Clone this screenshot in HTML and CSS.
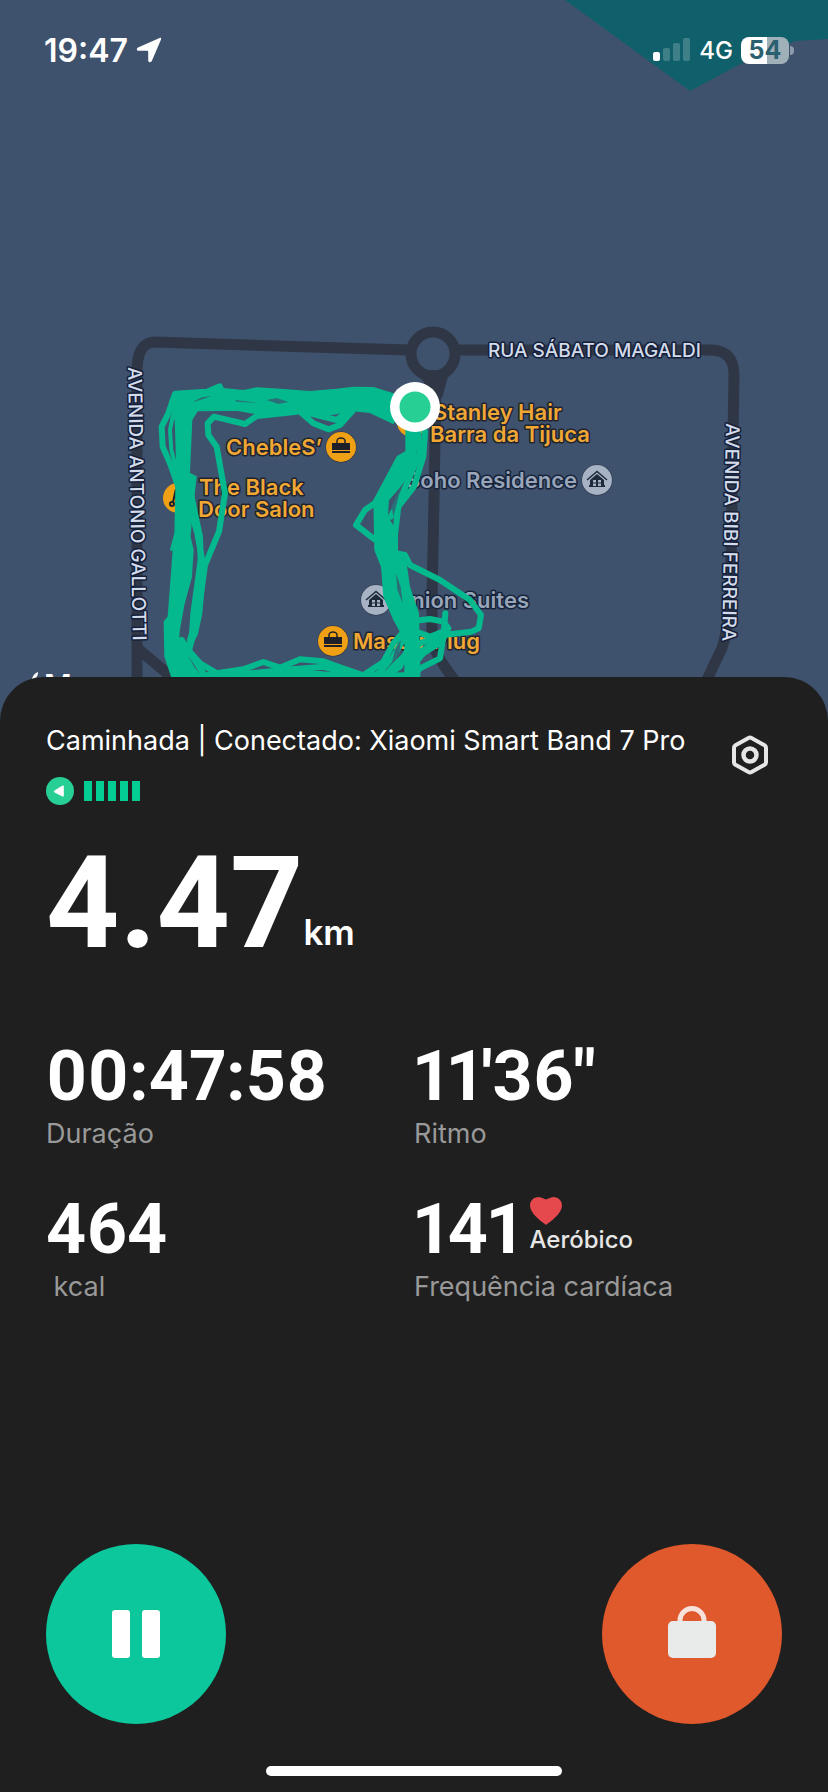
FILE: index.html
```html
<!DOCTYPE html>
<html lang="pt-BR">
<head>
	<meta charset="utf-8">
	<meta name="viewport" content="width=device-width, initial-scale=1">
	<title>Caminhada</title>
	<link rel="stylesheet" href="styles.css">
</head>
<body>

	<div class="screen">

		<header class="statusbar">
			<span class="clock">19:47
				<svg width="26" height="26" viewBox="0 0 26 26"><path d="M23.600 1C24.800.5 25.500 1.300 25 2.400L15.800 24C15 25.800 12.200 25.400 12.200 23.400V14.600Q12.200 13.800 11.400 13.800H2.600C.6 13.800.2 11.200 2 10.400z" fill="#fff"/></svg>
			</span>
			<span class="network">
				<svg width="38" height="24" viewBox="0 0 38 24" fill="#fff">
					<rect x="0" y="14" width="7" height="9" rx="2"/>
					<g opacity=".2">
						<rect x="10" y="10" width="7" height="13" rx="2"/>
						<rect x="20" y="5" width="7" height="18" rx="2"/>
						<rect x="30" y="0" width="7" height="23" rx="2"/>
					</g>
				</svg>
				<span class="carrier">4G</span>
				<span class="battery">54</span>
			</span>
		</header>

		<!-- Map -->
		<svg class="map" viewBox="0 0 828 720" role="img" aria-label="Mapa do percurso">
			<defs>
				<g id="bag">
					<circle r="15.500" fill="#2c3545"/>
					<circle r="15" fill="#efa014"/>
					<path d="M-4-4v-2a4 3 0 0 1 8 0v2" fill="none" stroke="#1d2029" stroke-width="1.500"/>
					<path d="M-9-4H9V3H-9zM-9 4H9V6H-9z" fill="#1d2029"/>
				</g>
				<g id="house">
					<circle r="15.500" fill="#2c3545"/>
					<circle r="15" fill="#a7b3c5"/>
					<path d="M-10 0L0-8.500 10 0" fill="none" stroke="#1f2a3a" stroke-width="1.500"/>
					<path d="M-7 0L0-6 7 0V5H8V7H-8V5H-7z" fill="#1f2a3a"/>
					<path d="M-4 0h3v2.500h-3zM1 0h3v2.500H1zM-4 3.500h3V6h-3zM1 3.500h3V6H1z" fill="#a7b3c5"/>
				</g>
			</defs>

			<rect width="828" height="720" fill="#3f526d"/>
			<path d="M565 0L690 91 748 60 795 41 828 39V0z" fill="#0f606a"/>

			<g class="roads">
				<path d="M137 720V375Q136 342 155 342L408 350"/>
				<path d="M458 350H712Q734 351 734 375L731 560Q730 625 722 648L702 690"/>
				<path d="M436 372L434 500 432 600V640Q434 655 462 690"/>
				<path d="M137 648L180 684"/>
				<circle cx="433" cy="354" r="22"/>
				<path d="M418 370H450L442 398H431z" fill="#2f3746" stroke="none"/>
			</g>

			<g class="street">
				<text x="488" y="357">RUA SÁBATO MAGALDI</text>
				<text transform="translate(128 367) rotate(89)">AVENIDA ANTONIO GALLOTTI</text>
				<text transform="translate(726 423) rotate(91)">AVENIDA BIBI FERREIRA</text>
			</g>

			<use href="#bag" x="341" y="447"/>
			<use href="#bag" x="333" y="641"/>
			<use href="#house" x="597" y="480"/>
			<use href="#house" x="376" y="600"/>
			<circle cx="412" cy="422" r="15" fill="#efa014"/>
			<circle cx="178" cy="498" r="15" fill="#efa014"/>
			<g fill="none" stroke="#1d2029" stroke-width="2">
				<circle cx="172" cy="504" r="2"/>
				<circle cx="179" cy="505" r="2"/>
				<path d="M176 489L173 502M176 489V503"/>
			</g>

			<g class="place">
				<text x="226" y="455">ChebleS’</text>
				<text><tspan x="199" y="495">The Black</tspan> <tspan x="198" y="517">Door Salon</tspan></text>
				<text><tspan x="433" y="420">Stanley Hair</tspan> <tspan x="430" y="442">Barra da Tijuca</tspan></text>
				<text x="353" y="649">Master Plug</text>
			</g>
			<g class="place hotel">
				<text x="406" y="488">Soho Residence</text>
				<text x="395" y="608">Union Suites</text>
			</g>

			<g class="route" transform="translate(110 320) scale(.33333)">
				<path class="fill" d="M195 214L290 208 320 195 333 192 340 206 400 212 440 204 510 208 600 215 680 208 730 202 790 203 850 222V310L780 277 730 272 650 286 560 276 480 288 380 270 262 272 245 300 238 460 258 470 248 560 235 700 228 820 205 900 207 960 250 1040 300 1100H195L165 1010 163 905 175 890 190 690 182 690 185 678 195 640 200 420 196 300 180 262 180 242z"/>
				<path d="M195 222L175 280 155 320 158 380 180 430 205 500"/>
				<path d="M205 240L188 290 180 330 184 390 200 450" stroke-width="12"/>
				<path d="M235 480L255 580 270 650 272 720 250 880 245 960 235 1000"/>
				<path d="M240 560L262 640 280 740 268 880 255 940 230 990"/>
				<path d="M225 620L242 690 237 770 215 850 195 960"/>
				<path d="M560 275L470 285 440 288 405 312 312 290 293 310 295 345 320 380 345 520 327 635 285 735 265 880 240 960"/>
				<path d="M235 990L270 1030 330 1065M215 960L280 1060"/>
				<path d="M570 275L610 310 655 328 690 315 730 270M600 280L680 300 720 270"/>
				<path d="M220 1080L330 1058 400 1048 460 1026 510 1043 570 1018 640 1024 690 1042 760 1066 820 1026 850 970 890 925"/>
				<path d="M300 1070L400 1062 520 1050 640 1040 740 1070 830 1060 890 1000"/>
				<path d="M250 1088L450 1072 580 1062 700 1072 900 1070" stroke-width="26"/>
				<path d="M835 285L860 300 905 330"/>

				<path class="fill" d="M888 330L925 330 912 440 870 500 835 540 832 590 862 640 862 690 888 730 898 800 925 880 930 1090H885V960L850 895 822 830 815 740 795 690 792 540 830 470 862 410 888 395z"/>
				<path d="M945 335L940 410 912 500 865 560 855 645"/>
				<path d="M925 335L928 400 895 480 870 540 842 590"/>
				<path d="M830 520L805 542 765 570 738 615 790 655 830 680"/>
				<path d="M860 700L885 705 900 735 990 780 1080 840 1113 885 1106 925 1085 935 1000 945 930 970 890 1010"/>
				<path d="M915 902L960 897 1000 905 1015 925 995 965 940 1000 890 1060"/>
				<path d="M1006 880L1000 950 990 1015 930 1045 900 1080"/>
				<path d="M905 930L960 950 1010 930M925 1000L985 960"/>
				<path d="M890 940L850 1010 800 1065M905 960L870 1040 820 1075"/>
				<g class="gaps">
					<path d="M470 240L500 234 535 246 505 252z"/>
					<path d="M248 246L275 232 305 228 270 240z"/>
					<path d="M845 560L872 500 862 545 850 590z"/>
					<path d="M375 240L440 248 380 245z"/>
					<path d="M858 760L872 800 878 850 862 810z"/>
					<path d="M855 990L872 960 868 1000 845 1030z"/>
				</g>
			</g>

			<circle cx="415" cy="407" r="25" fill="#fff"/>
			<circle cx="415" cy="407" r="15.500" fill="#27cf95"/>

			<g class="attribution">
				<path d="M32 679C33 675 35 673 38 672 38 676 36 679 32 680z"/>
				<path d="M21 692C21 686 25 683 29 683 31 683 33 684 35 684S39 683 42 685V700H24z"/>
				<text x="44" y="696">Maps</text>
			</g>
		</svg>

		<!-- Workout -->
		<main class="sheet">
			<div class="top">
				<div>
					<h1 class="title">Caminhada | Conectado: Xiaomi Smart Band 7 Pro</h1>
					<div class="signal">
						<svg width="28" height="28" viewBox="0 0 28 28"><circle cx="14" cy="14" r="14" fill="#27cf95"/><path d="M16.500 8.500Q17.800 8 17.800 9.500V18.500Q17.800 20 16.500 19.500L8.500 15.500Q7 14.500 8.500 13.500z" fill="#fff"/></svg>
						<span class="bars"><i></i><i></i><i></i><i></i><i></i></span>
					</div>
				</div>
				<button class="settings" aria-label="Configurações">
					<svg width="38" height="40" viewBox="0 0 38 40" fill="none" stroke="#e6e6e6" stroke-width="4" stroke-linejoin="round"><path d="M17.500 2.900Q19 2.100 20.500 2.900L33.500 10.200Q35 11.100 35 12.800V27.200Q35 28.900 33.500 29.800L20.500 37.100Q19 37.900 17.500 37.100L4.500 29.800Q3 28.900 3 27.200V12.800Q3 11.100 4.500 10.200z"/><circle cx="19" cy="20" r="6.500" stroke-width="4.500"/></svg>
				</button>
			</div>

			<p class="distance">4.47<span class="unit">km</span></p>

			<div class="stats">
				<div>
					<div class="value">00:47:58</div>
					<div class="label">Duração</div>
				</div>
				<div>
					<div class="value">11'36"</div>
					<div class="label">Ritmo</div>
				</div>
				<div>
					<div class="value">464</div>
					<div class="label">&nbsp;kcal</div>
				</div>
				<div>
					<div class="value">141
						<span class="zone">
							<svg width="32" height="28" viewBox="0 0 32 28"><path d="M16 28C11 24 0 16.500 0 8.500 0 3.500 4 0 8.500 0 12 0 14.500 2.500 16 2.500S20 0 23.500 0C28 0 32 3.500 32 8.500 32 16.500 21 24 16 28z" fill="#e5484d"/></svg>
							Aeróbico
						</span>
					</div>
					<div class="label">Frequência cardíaca</div>
				</div>
			</div>

			<div class="controls">
				<button class="round pause" aria-label="Pausar">
					<svg width="48" height="48" viewBox="0 0 48 48" fill="#fff"><rect width="18" height="48" rx="3"/><rect x="30" width="18" height="48" rx="3"/></svg>
				</button>
				<button class="round lock" aria-label="Bloquear">
					<svg width="48" height="56" viewBox="0 0 48 56"><path d="M12 18V14.500a12 12 0 0 1 24 0V18" fill="none" stroke="#f7e3dc" stroke-width="5"/><rect y="15" width="48" height="37" rx="5" fill="#e9ebea"/></svg>
				</button>
			</div>

			<div class="home"></div>
		</main>

	</div>

</body>
</html>
```
FILE: styles.css
```css
body{
	margin: 0;
	background-color: #1f1f1f;
	color: #fff;
	font-family: Inter, "Liberation Sans", sans-serif;
}

svg{
	display: block;
}

button{
	border: 0;
	padding: 0;
	background: none;
	display: flex;
	align-items: center;
	justify-content: center;
}

.screen{
	position: relative;
	display: flex;
	flex-direction: column;
	min-height: 100vh;
}

/* Status bar, floats over the map */
.statusbar{
	position: absolute;
	top: 0;
	left: 0;
	right: 0;
	display: flex;
	justify-content: space-between;
	align-items: center;
	height: 100px;
	padding: 0 39px 0 44px;
}

.clock{
	display: flex;
	align-items: center;
	gap: 8px;
	font-size: 32px;
	font-weight: 600;
}

.network{
	display: flex;
	align-items: center;
	gap: 8px;
}

.carrier{
	font-size: 24px;
	font-weight: 500;
}

.battery{
	position: relative;
	width: 48px;
	line-height: 27px;
	border-radius: 8px;
	background: linear-gradient(to right, #fff 54%, #9fb0b8 54%);
	color: #2b6070;
	font-size: 25px;
	font-weight: 700;
	text-align: center;
}

.battery::after{
	content: "";
	position: absolute;
	top: 9px;
	right: -5px;
	width: 4px;
	height: 9px;
	border-radius: 0 4px 4px 0;
	background-color: #8d9cab;
}

/* Map */
.map{
	width: 100%;
}

.roads{
	fill: none;
	stroke: #2f3746;
	stroke-width: 11;
}

.street text, .place text{
	paint-order: stroke;
	stroke-linejoin: round;
}

.street text{
	font-size: 19px;
	font-weight: 500;
	fill: #d3dbea;
	stroke: #14203a;
	stroke-width: 3;
}

.place text{
	font-size: 22px;
	font-weight: 600;
	fill: #f0a734;
	stroke: #20242e;
	stroke-width: 3;
}

.hotel text{
	fill: #98a5b9;
	stroke: #16233a;
}

.route{
	fill: none;
	stroke: #04b98d;
	stroke-width: 18;
	stroke-linejoin: round;
	stroke-linecap: round;
}

.route .fill{
	fill: #04b98d;
	stroke-width: 4;
}

.gaps{
	fill: #2b6f78;
	stroke: none;
}

.attribution{
	fill: #fff;
	font-size: 30px;
	font-weight: 600;
}

/* Sheet */
.sheet{
	position: relative;
	flex: 1;
	display: flex;
	flex-direction: column;
	margin-top: -43px;
	padding: 46px 46px 16px;
	border-radius: 44px 44px 0 0;
	background-color: #1f1f1f;
}

.top{
	display: flex;
	justify-content: space-between;
}

.title{
	margin: 0;
	font-size: 27px;
	font-weight: 400;
	line-height: 36px;
}

.signal{
	display: flex;
	align-items: center;
	gap: 10px;
	margin-top: 18px;
}

.bars{
	display: flex;
	gap: 4px;
}

.bars i{
	width: 8px;
	height: 20px;
	background-color: #05ce92;
}

.settings{
	width: 64px;
	height: 64px;
}

.distance{
	display: flex;
	align-items: flex-end;
	margin: 42px 0 85px;
	font-family: Roboto, sans-serif;
	font-size: 128px;
	font-weight: 700;
	line-height: 112px;
}

.unit{
	font-family: Inter, sans-serif;
	font-size: 35px;
	font-weight: 600;
	line-height: 54px;
}

.stats{
	display: grid;
	grid-template-columns: 1fr 1fr;
	row-gap: 45px;
}

.value{
	display: flex;
	gap: 8px;
	font-family: Roboto, sans-serif;
	font-size: 70px;
	font-weight: 700;
	font-variant-numeric: proportional-nums;
	line-height: 64px;
}

.zone{
	font-family: Inter, sans-serif;
	font-size: 24px;
	font-weight: 500;
	line-height: 30px;
	color: #e6e6e6;
}

.label{
	margin-top: 8px;
	font-size: 27px;
	line-height: 36px;
	color: #999;
}

.controls{
	display: flex;
	justify-content: space-between;
	margin-top: auto;
}

.round{
	width: 180px;
	height: 180px;
	border-radius: 50%;
}

.pause{
	background-color: #0bc79b;
}

.lock{
	background-color: #e0592c;
}

.home{
	width: 296px;
	height: 10px;
	margin: 42px auto 0;
	border-radius: 5px;
	background-color: #fff;
}
```
